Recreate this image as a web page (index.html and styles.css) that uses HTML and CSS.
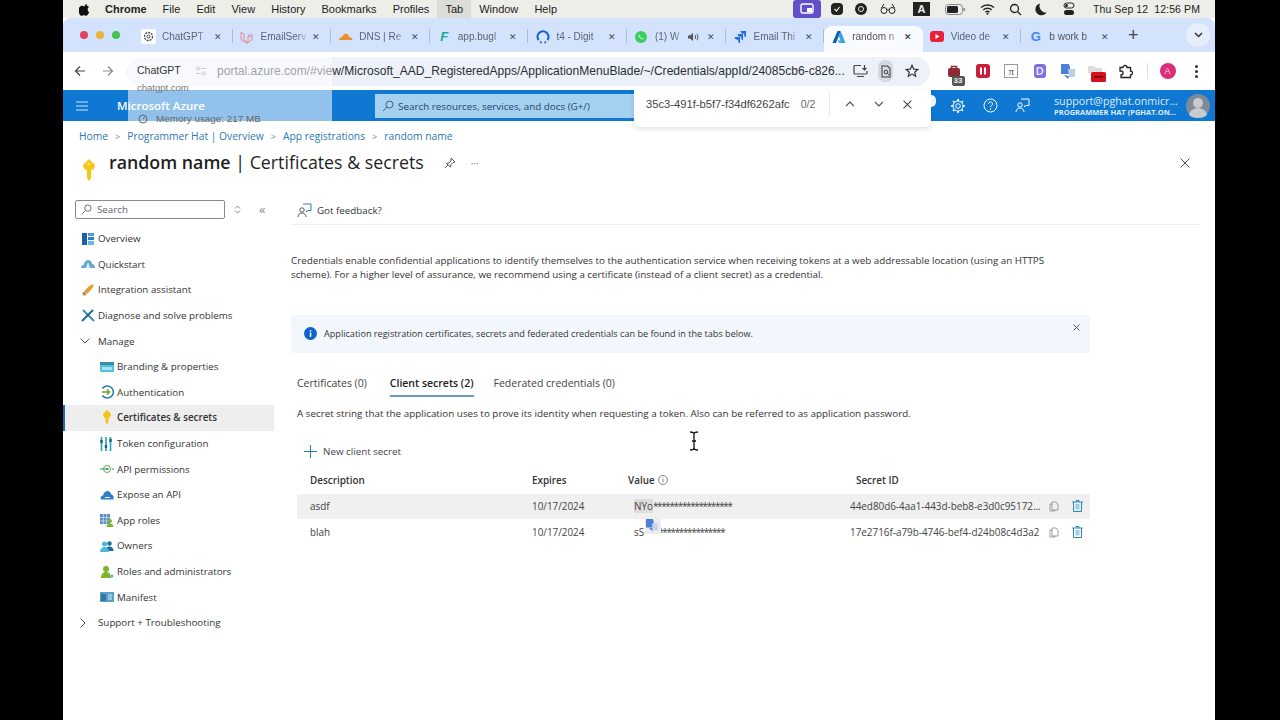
FILE: index.html
```html
<!DOCTYPE html>
<html lang="en">

<head>
  <meta charset="UTF-8" />
  <title>random name | Certificates &amp; secrets</title>
  <meta name="viewport" content="width=device-width, initial-scale=1.0" />
  <link rel="stylesheet" href="styles.css">
</head>

<body>
  <div class="screen">

    <!-- Mac menu bar -->
    <div class="menubar">
      <div class="menu-left">
        <svg class="apple" viewBox="0 0 14 16"><path d="M10.2 1c.1 1-.3 1.9-.9 2.6-.6.7-1.5 1.2-2.4 1.1-.1-1 .4-1.9.9-2.5C8.4 1.5 9.4 1 10.2 1zM13 11.4c-.4.9-.6 1.3-1.1 2.1-.7 1.1-1.7 2.4-2.9 2.4-1.100 0-1.400-.7-2.800-.7s-1.800.7-2.900.7c-1.200 0-2.100-1.200-2.800-2.300C-.5 10.500-.7 7 .5 5.200c.8-1.300 2.100-2 3.300-2 1.200 0 2 .7 3 .7s1.600-.7 3-.7c1.100 0 2.200.6 3 1.600-2.600 1.500-2.200 5.300.2 6.600z"/></svg>
        <span class="menu-app">Chrome</span>
        <span class="menu-item">File</span>
        <span class="menu-item">Edit</span>
        <span class="menu-item">View</span>
        <span class="menu-item">History</span>
        <span class="menu-item">Bookmarks</span>
        <span class="menu-item">Profiles</span>
        <span class="menu-item menu-active">Tab</span>
        <span class="menu-item">Window</span>
        <span class="menu-item">Help</span>
      </div>
      <div class="menu-right">
        <span class="status-purple"><svg width="14" height="12" viewBox="0 0 14 12"><rect x="1" y="1" width="12" height="9" rx="1.5" fill="none" stroke="#fff" stroke-width="1.4"/><rect x="7" y="5" width="5" height="4" fill="#fff"/></svg></span>
        <svg class="st st-shield" width="14" height="14" viewBox="0 0 14 14"><rect x="1" y="1" width="12" height="12" rx="4" fill="#222"/><path d="M4.5 7l2 2 3-4" fill="none" stroke="#eee" stroke-width="1.2"/></svg>
        <svg class="st st-round" width="14" height="14" viewBox="0 0 14 14"><circle cx="7" cy="7" r="6" fill="#222"/><circle cx="7" cy="7" r="2.5" fill="none" stroke="#eee"/></svg>
        <svg class="st st-glasses" width="16" height="12" viewBox="0 0 16 12"><circle cx="4" cy="7.5" r="3" fill="none" stroke="#222"/><circle cx="12" cy="7.5" r="3" fill="none" stroke="#222"/><path d="M7 7c.6-.6 1.400-.6 2 0M1.500 5L4 1M14.500 5L12 1" fill="none" stroke="#222"/></svg>
        <span class="status-a">A</span>
        <svg class="st st-batt" width="21" height="11" viewBox="0 0 21 11"><rect x=".5" y=".5" width="17" height="10" rx="3" fill="none" stroke="#888"/><rect x="2" y="2" width="11" height="7" rx="1.5" fill="#222"/><rect x="18.5" y="4" width="1.5" height="3" fill="#888"/></svg>
        <svg class="st st-wifi" width="15" height="12" viewBox="0 0 15 12"><path d="M1 4.500c3.600-3.400 9.400-3.400 13 0M3.300 7c2.300-2.200 6.100-2.200 8.400 0M5.500 9.200c1.100-1 2.900-1 4 0" fill="none" stroke="#222" stroke-width="1.5"/><circle cx="7.5" cy="10.8" r="1" fill="#222"/></svg>
        <svg class="st st-search" width="13" height="13" viewBox="0 0 13 13"><circle cx="5.5" cy="5.5" r="4" fill="none" stroke="#222" stroke-width="1.3"/><path d="M8.500 8.500L12 12" stroke="#222" stroke-width="1.3"/></svg>
        <svg class="st st-moon" width="12" height="13" viewBox="0 0 12 13"><path d="M5 .5a6 6 0 1 0 6.500 9A6.500 6.500 0 0 1 5 .5z" fill="#222"/></svg>
        <svg class="st st-ctrl" width="12" height="14" viewBox="0 0 12 14"><rect x="1" y="1" width="10" height="5" rx="2.5" fill="none" stroke="#222"/><rect x="1" y="8" width="10" height="5" rx="2.5" fill="#222"/><circle cx="3.5" cy="3.5" r="1.5" fill="#222"/></svg>
        <span class="clock">Thu Sep 12&nbsp; 12:56 PM</span>
      </div>
    </div>

    <!-- Chrome tab strip -->
    <div class="tabstrip">
      <div class="traffic">
        <i class="dot red"></i><i class="dot amber"></i><i class="dot green"></i>
      </div>
      <div class="tabs">
        <div class="tab"><span class="fav fav-gpt"><svg width="11" height="11" viewBox="0 0 11 11"><circle cx="5.5" cy="5.5" r="4" fill="none" stroke="#444" stroke-width="1.3" stroke-dasharray="2 1"/><circle cx="5.5" cy="5.5" r="1.5" fill="none" stroke="#444"/></svg></span><span class="tab-text">ChatGPT</span><span class="tab-x">✕</span></div>
        <div class="tab"><span class="fav"><svg width="14" height="14" viewBox="0 0 14 14"><path d="M1 2.500l3 1.500v6l4 2.500 4-2.500V7M1 2.500v7.500l7 3.500M8 12.500V6l3-2 2 1.500-2 1.500-3-1.500" fill="none" stroke="#e58aa0"/></svg></span><span class="tab-text">EmailServ</span><span class="tab-x">✕</span></div>
        <div class="tab"><span class="fav"><svg width="15" height="9" viewBox="0 0 15 9"><path d="M1 8c0-2 1.500-3 3-3 .6-2.500 3-4 5-3 1.300.6 2 1.800 2 3 1.800-.2 3.500 1.300 3.500 3z" fill="#f0902c"/></svg></span><span class="tab-text">DNS | Re</span><span class="tab-x">✕</span></div>
        <div class="tab"><span class="fav fav-f">F</span><span class="tab-text">app.bugl</span><span class="tab-x">✕</span></div>
        <div class="tab"><span class="fav"><svg width="14" height="14" viewBox="0 0 14 14"><path d="M2.500 10A5.500 5.500 0 1 1 11.500 10" fill="none" stroke="#1a5fd0" stroke-width="2.2"/><path d="M4 11.500l1.500 1.500M10 11.500L8.500 13" stroke="#1a5fd0" stroke-width="1.6"/></svg></span><span class="tab-text">t4 - Digit</span><span class="tab-x">✕</span></div>
        <div class="tab"><span class="fav"><svg width="14" height="14" viewBox="0 0 14 14"><circle cx="7" cy="7" r="6" fill="#3ccf5e"/><path d="M5 4.500c-.8.800-.4 2 .8 3.300S8.700 9.800 9.500 9l-1.300-1-.7.400c-.6-.3-1.200-.9-1.500-1.500l.4-.7z" fill="#fff"/></svg></span><span class="tab-text tab-short">(1) W</span><svg class="tab-speaker" width="12" height="10" viewBox="0 0 12 10"><path d="M1 3.500h2L6 1v8L3 6.500H1z" fill="#555"/><path d="M8 3c.8.800.8 3.200 0 4M9.800 1.800c1.400 1.500 1.400 4.900 0 6.400" fill="none" stroke="#555"/></svg><span class="tab-x">✕</span></div>
        <div class="tab"><span class="fav"><svg width="14" height="14" viewBox="0 0 14 14"><path d="M13 1H7.500c0 1.500 1.200 2.700 2.700 2.700h1V5c0 1.300 1 2.300 1.800 2.300zM10 4H4.500c0 1.500 1.200 2.700 2.700 2.700h1V8c0 1.300 1 2.300 1.800 2.300zM7 7H1.500c0 1.500 1.200 2.700 2.700 2.700h1V11C5.200 12.300 6.200 13.300 7 13.300z" fill="#2070e0"/></svg></span><span class="tab-text">Email Thi</span><span class="tab-x">✕</span></div>
        <div class="tab tab-active"><span class="fav"><svg width="14" height="14" viewBox="0 0 14 14"><path d="M5.500 1h3.200L4 13H.5z" fill="#0a5fb0"/><path d="M8.700 1l4.800 12H7.500L5.500 10.500h3L6.800 6z" fill="#3ba3e8"/></svg></span><span class="tab-text">random n</span><span class="tab-x tab-x-dark">✕</span></div>
        <div class="tab"><span class="fav"><svg width="14" height="11" viewBox="0 0 14 11"><rect width="14" height="11" rx="3" fill="#e8203a"/><path d="M5.500 3v5l4-2.500z" fill="#fff"/></svg></span><span class="tab-text">Video de</span><span class="tab-x">✕</span></div>
        <div class="tab tab-last"><span class="fav fav-g">G</span><span class="tab-text">b work b</span><span class="tab-x">✕</span></div>
        <span class="tab-plus">+</span>
      </div>
      <span class="tab-drop"><svg width="9" height="6" viewBox="0 0 9 6"><path d="M1 1l3.500 3.500L8 1" fill="none" stroke="#333" stroke-width="1.5"/></svg></span>
    </div>

    <!-- Chrome toolbar -->
    <div class="toolbar">
      <svg class="nav-btn" width="12" height="12" viewBox="0 0 12 12"><path d="M11 6H1.500M6 1.500L1.500 6 6 10.500" fill="none" stroke="#444" stroke-width="1.2"/></svg>
      <svg class="nav-btn nav-fwd" width="12" height="12" viewBox="0 0 12 12"><path d="M1 6h9.500M6 1.500L10.500 6 6 10.500" fill="none" stroke="#8a8a8a" stroke-width="1.2"/></svg>
      <div class="omnibox">
        <svg class="tune" width="12" height="10" viewBox="0 0 12 10"><circle cx="3" cy="2.5" r="1.5" fill="none" stroke="#888"/><path d="M6 2.500h5M1 7.500h5" stroke="#888"/><circle cx="9" cy="7.5" r="1.5" fill="none" stroke="#888"/></svg>
        <span class="url">portal.azure.com/#view/Microsoft_AAD_RegisteredApps/ApplicationMenuBlade/~/Credentials/appId/24085cb6-c826...</span>
        <svg class="omni-icon" width="15" height="14" viewBox="0 0 15 14"><path d="M8 1.500H2a1 1 0 0 0-1 1V9a1 1 0 0 0 1 1h11a1 1 0 0 0 1-1V7M4 12.500h7M11.500 1v5M9.500 4l2 2 2-2" fill="none" stroke="#444" stroke-width="1.2"/></svg>
        <span class="lens-btn"><svg width="10" height="13" viewBox="0 0 10 13"><path d="M1 1h5.500L9 3.500V12H1z" fill="none" stroke="#444" stroke-width="1.1"/><circle cx="5" cy="7" r="1.8" fill="none" stroke="#444"/><path d="M6.300 8.300L8 10" stroke="#444"/></svg></span>
        <svg class="omni-star" width="14" height="14" viewBox="0 0 14 14"><path d="M7 1.300l1.700 3.800 4 .4-3 2.700.9 4L7 10.100 3.400 12.200l.9-4-3-2.700 4-.4z" fill="none" stroke="#333" stroke-width="1.2"/></svg>
      </div>
      <div class="extensions">
        <span class="ext ext-bag"><svg width="14" height="13" viewBox="0 0 14 13"><rect x="1" y="3" width="12" height="9" rx="2" fill="#8c2a35"/><path d="M4.500 3V1.500h5V3" fill="none" stroke="#8c2a35" stroke-width="1.5"/></svg><b class="badge-33">33</b></span>
        <span class="ext"><svg width="14" height="14" viewBox="0 0 14 14"><rect width="14" height="14" rx="3" fill="#c81e3c"/><rect x="4" y="3.5" width="2" height="7" fill="#fff"/><rect x="8" y="3.5" width="2" height="7" fill="#fff"/></svg></span>
        <span class="ext"><span class="ext-pi">π</span></span>
        <span class="ext"><span class="ext-d">D</span></span>
        <span class="ext"><svg width="14" height="15" viewBox="0 0 14 15"><path d="M0 0h8l1 3v7H0z" fill="#4a80d8"/><path d="M7 5h7v8H8z" fill="#bcd0e8"/><path d="M3 11l4 4 1-3z" fill="#4a80d8"/></svg></span>
        <span class="ext ext-folder"><svg width="20" height="19" viewBox="0 0 20 19"><path d="M1 2h6l2 2h6v5H1z" fill="#ddd"/><rect x="4" y="8" width="15" height="10" rx="1.5" fill="#d8101c"/><rect x="7" y="12" width="9" height="1.5" fill="#600"/></svg></span>
        <span class="ext"><svg width="15" height="15" viewBox="0 0 15 15"><path d="M2 3.500h3a2 2 0 0 1 4 0h3.500V7a2 2 0 0 1 0 4v2.500H3V11a2 2 0 0 0 0-4H2z" fill="none" stroke="#222" stroke-width="1.3"/></svg></span>
      </div>
      <span class="toolbar-sep"></span>
      <span class="avatar-a">A</span>
      <span class="kebab"><i></i><i></i><i></i></span>
    </div>

    <!-- Azure top bar -->
    <div class="azure-bar">
      <svg class="burger" width="12" height="10" viewBox="0 0 12 10"><path d="M0 1h12M0 5h12M0 9h12" stroke="#cfe4f6"/></svg>
      <span class="azure-name">Microsoft Azure</span>
      <div class="azure-search">
        <svg width="12" height="12" viewBox="0 0 12 12"><circle cx="7.5" cy="4.5" r="3.5" fill="none" stroke="#40607c"/><path d="M5 7L1 11" stroke="#40607c"/></svg>
        <span>Search resources, services, and docs (G+/)</span>
      </div>
      <div class="azure-actions">
        <svg width="16" height="16" viewBox="0 0 16 16"><circle cx="8" cy="8" r="2.3" fill="none" stroke="#fff"/><circle cx="8" cy="8" r="5" fill="none" stroke="#fff"/><path d="M8 1v2M8 13v2M1 8h2M13 8h2M3 3l1.500 1.500M11.500 11.500L13 13M13 3l-1.500 1.500M4.500 11.500L3 13" stroke="#fff" stroke-width="1.6"/></svg>
        <svg width="15" height="15" viewBox="0 0 15 15"><circle cx="7.5" cy="7.5" r="6.5" fill="none" stroke="#fff"/><path d="M5.500 5.800a2 2 0 1 1 3 1.800c-.7.400-1 .8-1 1.600" fill="none" stroke="#fff"/><circle cx="7.5" cy="11" r=".7" fill="#fff"/></svg>
        <svg width="15" height="15" viewBox="0 0 15 15"><path d="M6 1h8v6.500h-3L9.500 9V7.500" fill="none" stroke="#fff"/><circle cx="5" cy="7" r="2.2" fill="none" stroke="#fff"/><path d="M1 14c0-2.500 1.800-4 4-4s4 1.500 4 4" fill="none" stroke="#fff"/></svg>
      </div>
      <div class="account">
        <span class="account-mail">support@pghat.onmicr...</span>
        <span class="account-org">PROGRAMMER HAT (PGHAT.ON...</span>
      </div>
      <span class="account-pic"><svg width="24" height="24" viewBox="0 0 24 24"><circle cx="12" cy="12" r="12" fill="#7e8b96"/><circle cx="12" cy="9" r="5" fill="#c6cbd0"/><path d="M3 21c1-5 5-7 9-7s8 2 9 7c-2 2-5 3-9 3s-7-1-9-3z" fill="#c6cbd0"/></svg></span>
    </div>

    <!-- Portal page -->
    <div class="breadcrumb">
      <a>Home</a><em>&gt;</em><a>Programmer Hat | Overview</a><em>&gt;</em><a>App registrations</a><em>&gt;</em><a>random name</a>
    </div>

    <div class="page-head">
      <svg class="title-key" width="16" height="24" viewBox="0 0 16 24"><path d="M8 1l6 6c0 3-2 5-4 5.500V20l-2 3-2-3v-7.500C4 12 2 10 2 7z" fill="#f5c518"/><circle cx="8" cy="6" r="1.5" fill="#fbe58a"/></svg>
      <h1><b>random name</b> | Certificates &amp; secrets</h1>
      <svg class="pin" width="12" height="12" viewBox="0 0 12 12"><path d="M7 1l4 4-2 .5-2 2-.5 2.500L2.500 6.500 5 6l2-2zM4 8l-3 3" fill="none" stroke="#555"/></svg>
      <span class="more">···</span>
      <svg class="blade-close" width="10" height="10" viewBox="0 0 10 10"><path d="M.5.500l9 9M9.500.500l-9 9" stroke="#555"/></svg>
    </div>

    <div class="blade">
      <div class="sidebar">
        <div class="side-search">
          <div class="side-input">
            <svg width="11" height="11" viewBox="0 0 12 12"><circle cx="7.5" cy="4.5" r="3.5" fill="none" stroke="#666"/><path d="M5 7L1 11" stroke="#666"/></svg>
            <span>Search</span>
          </div>
          <svg class="sort" width="7" height="9" viewBox="0 0 7 9"><path d="M1 3.500L3.500 1 6 3.500M1 5.500L3.500 8 6 5.500" fill="none" stroke="#888"/></svg>
          <span class="collapse">«</span>
        </div>
        <ul class="side-list">
          <li><svg class="ic" width="14" height="14" viewBox="0 0 14 14"><rect x="1" y="1" width="5" height="12" fill="#1d5fa8"/><rect x="7" y="1" width="6" height="3" fill="#4a9ede"/><rect x="7" y="5" width="6" height="3" fill="#2a7fc8"/><rect x="7" y="9" width="6" height="4" fill="#6bb6e6"/></svg>Overview</li>
          <li><svg class="ic" width="14" height="10" viewBox="0 0 14 10"><path d="M0 9c0-2 1-3 2.500-3C3 3 5 1 7 1c2.500 0 4 2 4.200 4C13 5 14 7 14 9z" fill="#6aaac8"/><path d="M7 3l2 6H5z" fill="#dbeef8"/></svg>Quickstart</li>
          <li><svg class="ic" width="14" height="14" viewBox="0 0 14 14"><path d="M13 1C9 2 5 5 3 9l2 2c4-2 7-6 8-10z" fill="#e0a030"/><path d="M3 9l-2 1 3 3 1-2z" fill="#d0622a"/><path d="M1 13l2-3 1 1z" fill="#8ab040"/></svg>Integration assistant</li>
          <li><svg class="ic" width="14" height="14" viewBox="0 0 14 14"><path d="M2 1l11 11" stroke="#3a8fb0" stroke-width="2"/><path d="M12 1L1 12" stroke="#1d6a88" stroke-width="2"/></svg>Diagnose and solve problems</li>
          <li><svg class="chev" width="10" height="6" viewBox="0 0 10 6"><path d="M.5.500L5 5 9.500.500" fill="none" stroke="#555"/></svg>Manage</li>
          <li class="sub"><svg class="ic" width="14" height="12" viewBox="0 0 14 12"><rect y="1" width="14" height="10" rx="1" fill="#4fc3d9"/><rect y="1" width="14" height="3" fill="#3a8fa8"/><rect x="2" y="6" width="10" height="3" fill="#a6e3ee"/></svg>Branding &amp; properties</li>
          <li class="sub"><svg class="ic" width="14" height="14" viewBox="0 0 14 14"><path d="M2.500 3.500a6 6 0 1 1 0 7" fill="none" stroke="#1f7fa8" stroke-width="1.5"/><path d="M2 7h7M7 4.500L9.500 7 7 9.500" fill="none" stroke="#6aa82a" stroke-width="1.5"/></svg>Authentication</li>
          <li class="sub side-active"><svg class="ic" width="10" height="15" viewBox="0 0 10 15"><path d="M5 0l4 4c0 2-1.200 3.500-2.500 3.900V12L5 14.500 3.500 12V7.900C2.200 7.500 1 6 1 4z" fill="#f5c518"/></svg>Certificates &amp; secrets</li>
          <li class="sub"><svg class="ic" width="12" height="14" viewBox="0 0 12 14"><path d="M1.500 0v14M6 0v14M10.500 0v14" stroke="#2aa0b8" stroke-width="1.6"/><path d="M1.500 3v3M6 8v3M10.500 2v3" stroke="#1a5f78" stroke-width="2.4"/></svg>Token configuration</li>
          <li class="sub"><svg class="ic" width="14" height="10" viewBox="0 0 14 10"><circle cx="7" cy="5" r="3.5" fill="none" stroke="#6aa82a"/><path d="M0 5h9M12 5h2" stroke="#2a90a8"/><circle cx="7" cy="5" r="1" fill="#2a90a8"/></svg>API permissions</li>
          <li class="sub"><svg class="ic" width="14" height="10" viewBox="0 0 14 10"><path d="M1 9.500c-1-2 .2-4 2-4C3.500 3 5.500 1 7.500 1c2.300 0 3.500 2 3.700 3.500 2 0 3 2.500 2 5z" fill="#2c7fc8"/><path d="M5 7.500h5" stroke="#fff"/></svg>Expose an API</li>
          <li class="sub"><svg class="ic" width="14" height="14" viewBox="0 0 14 14"><rect y="1" width="10" height="10" fill="#5a8fc0"/><path d="M0 4.500h10M0 8h10M3.300 1v10M6.600 1v10" stroke="#d6e6f2" stroke-width=".7"/><circle cx="10" cy="8" r="2" fill="#7ab82a"/><path d="M6.500 14c0-2 1.500-3.500 3.500-3.500s3.500 1.500 3.500 3.500z" fill="#7ab82a"/></svg>App roles</li>
          <li class="sub"><svg class="ic" width="14" height="12" viewBox="0 0 14 12"><circle cx="9.5" cy="3.5" r="2.3" fill="#1f6f98"/><path d="M5.500 11c0-3 1.500-4.500 4-4.500s4 1.500 4 4.500z" fill="#1f6f98"/><circle cx="4.5" cy="4" r="2.5" fill="#4fb5dc"/><path d="M0 12c0-3 1.800-5 4.500-5S9 9 9 12z" fill="#4fb5dc"/></svg>Owners</li>
          <li class="sub"><svg class="ic" width="14" height="14" viewBox="0 0 14 14"><circle cx="6" cy="4" r="3" fill="#7ab82a"/><path d="M1 13c0-4 2-6 5-6s5 2 5 6z" fill="#7ab82a"/><circle cx="12" cy="11" r="1.5" fill="#4fb5dc"/></svg>Roles and administrators</li>
          <li class="sub"><svg class="ic" width="14" height="12" viewBox="0 0 14 12"><rect y="1" width="14" height="10" fill="#5a9fc8"/><rect x="1" y="3" width="5" height="7" fill="#2f78a8"/><path d="M8 4h4M8 6h4M8 8h4" stroke="#cfe6f2"/></svg>Manifest</li>
          <li><svg class="chev" width="6" height="10" viewBox="0 0 6 10"><path d="M.5.500L5 5 .5 9.500" fill="none" stroke="#555"/></svg>Support + Troubleshooting</li>
        </ul>
      </div>

      <div class="content">
        <div class="command-bar">
          <svg width="15" height="15" viewBox="0 0 15 15"><path d="M6 1h8v6.500h-3L9.500 9V7.500" fill="none" stroke="#2a7fb8"/><circle cx="5" cy="7" r="2.2" fill="none" stroke="#555"/><path d="M1 14c0-2.500 1.800-4 4-4s4 1.500 4 4" fill="none" stroke="#555"/></svg>
          <span>Got feedback?</span>
        </div>

        <p class="intro">Credentials enable confidential applications to identify themselves to the authentication service when receiving tokens at a web addressable location (using an HTTPS scheme). For a higher level of assurance, we recommend using a certificate (instead of a client secret) as a credential.</p>

        <div class="banner">
          <svg width="13" height="13" viewBox="0 0 13 13"><circle cx="6.5" cy="6.5" r="6.5" fill="#0f62c9"/><rect x="5.800" y="5.500" width="1.500" height="4.500" fill="#fff"/><rect x="5.800" y="3" width="1.500" height="1.500" fill="#fff"/></svg>
          <span>Application registration certificates, secrets and federated credentials can be found in the tabs below.</span>
          <svg class="banner-x" width="7" height="7" viewBox="0 0 7 7"><path d="M.5.500l6 6M6.500.500l-6 6" stroke="#555"/></svg>
        </div>

        <div class="cred-tabs">
          <span class="cred-tab">Certificates (0)</span>
          <span class="cred-tab cred-active">Client secrets (2)</span>
          <span class="cred-tab">Federated credentials (0)</span>
        </div>

        <div class="tab-body">
          <p class="secret-desc">A secret string that the application uses to prove its identity when requesting a token. Also can be referred to as application password.</p>

          <div class="new-secret">
            <svg width="13" height="13" viewBox="0 0 13 13"><path d="M6.500 0v13M0 6.500h13" stroke="#2a7fa8"/></svg>
            <span>New client secret</span>
          </div>

          <div class="secrets">
            <div class="row row-head">
              <span class="c-desc">Description</span>
              <span class="c-exp">Expires</span>
              <span class="c-val">Value <svg width="10" height="10" viewBox="0 0 10 10"><circle cx="5" cy="5" r="4.5" fill="none" stroke="#666" stroke-width=".8"/><path d="M5 4v3.500M5 2.500v.8" stroke="#666" stroke-width=".8"/></svg></span>
              <span class="c-id">Secret ID</span>
            </div>
            <div class="row row-hover">
              <span class="c-desc">asdf</span>
              <span class="c-exp">10/17/2024</span>
              <span class="c-val c-mask"><mark>NYo</mark><span class="stars">*******************</span></span>
              <span class="c-id c-idval">44ed80d6-4aa1-443d-beb8-e3d0c95172...</span>
              <svg class="copy" width="10" height="11" viewBox="0 0 10 11"><path d="M3 1h4l2 2v6H3zM3 3H1v7h5V9" fill="none" stroke="#888" stroke-width=".8"/></svg>
              <svg class="trash" width="11" height="12" viewBox="0 0 11 12"><path d="M0 2h11M4 2V.5h3V2M1.500 2v9.500h8V2" fill="none" stroke="#2a88b8"/><rect x="3.500" y="4" width="4" height="5.500" fill="#9ccbe4"/></svg>
            </div>
            <div class="row">
              <span class="c-desc">blah</span>
              <span class="c-exp">10/17/2024</span>
              <span class="c-val c-mask">sS<span class="mask-gap"></span><span class="stars">****************</span></span>
              <span class="c-id c-idval">17e2716f-a79b-4746-bef4-d24b08c4d3a2</span>
              <svg class="copy" width="10" height="11" viewBox="0 0 10 11"><path d="M3 1h4l2 2v6H3zM3 3H1v7h5V9" fill="none" stroke="#888" stroke-width=".8"/></svg>
              <svg class="trash" width="11" height="12" viewBox="0 0 11 12"><path d="M0 2h11M4 2V.5h3V2M1.500 2v9.500h8V2" fill="none" stroke="#2a88b8"/><rect x="3.500" y="4" width="4" height="5.500" fill="#9ccbe4"/></svg>
            </div>
          </div>
        </div>
      </div>
    </div>

    <!-- Chrome tab hover card, lies over the toolbar and the portal -->
    <div class="hovercard">
      <div class="hc-title">ChatGPT</div>
      <div class="hc-host">chatgpt.com</div>
      <div class="hc-mem">
        <svg width="10" height="10" viewBox="0 0 10 10"><circle cx="5" cy="5" r="4" fill="none" stroke="#666"/><path d="M5 5l2-2" stroke="#666"/></svg>
        Memory usage: 217 MB
      </div>
    </div>

    <!-- Chrome find in page bar -->
    <div class="findbar">
      <span class="find-text">35c3-491f-b5f7-f34df6262afc</span>
      <span class="find-count">0/2</span>
      <span class="find-sep"></span>
      <svg width="10" height="6" viewBox="0 0 10 6"><path d="M1 5l4-4 4 4" fill="none" stroke="#555" stroke-width="1.2"/></svg>
      <svg width="10" height="6" viewBox="0 0 10 6"><path d="M1 1l4 4 4-4" fill="none" stroke="#555" stroke-width="1.2"/></svg>
      <svg width="9" height="9" viewBox="0 0 9 9"><path d="M.5.500l8 8M8.500.500l-8 8" stroke="#444" stroke-width="1.1"/></svg>
    </div>
    <span class="notif-dot"></span>

    <!-- Text cursor and translate popup over the page -->
    <svg class="ibeam" width="10" height="20" viewBox="0 0 10 20"><path d="M1 1c2 0 4 .5 4 2v14c0 1.500-2 2-4 2M9 1c-2 0-4 .5-4 2v14c0 1.500 2 2 4 2M3 10h4" fill="none" stroke="#111" stroke-width="1.3"/></svg>
    <span class="translate-pop"><svg width="12" height="12" viewBox="0 0 14 14"><path d="M0 0h8l1 3v7H0z" fill="#4a80d8"/><path d="M7 5h7v8H8z" fill="#c8d6e6"/><path d="M3 10l4 4 1-3z" fill="#4a80d8"/></svg></span>
  </div>
</body>

</html>
```

FILE: styles.css
```css
* {
  box-sizing: border-box;
}

html,
body {
  margin: 0;
  height: 100%;
  overflow: hidden;
  background: #000;
}

body {
  font-family: 'Open Sans', 'Liberation Sans', sans-serif;
  color: #2b2b2b;
}

.screen {
  position: relative;
  width: 1152px;
  height: 720px;
  margin-left: 63px;
  background: #fff;
  overflow: hidden;
}

/* Menu bar */
.menubar {
  display: flex;
  justify-content: space-between;
  align-items: center;
  height: 18px;
  padding: 0 15px 0 16px;
  background: #eeeee9;
  font-family: 'Liberation Sans', sans-serif;
  font-size: 11px;
  color: #222;
}

.menu-left,
.menu-right {
  display: flex;
  align-items: center;
  height: 100%;
}

.apple {
  width: 11px;
  height: 13px;
  margin-right: 15px;
  fill: #111;
}

.menu-app {
  font-weight: 700;
  margin-right: 16px;
}

.menu-item {
  margin-right: 16.1px;
}

.menu-active {
  margin-left: -8px;
  margin-right: 8px;
  padding: 3px 8px;
  background: #dcdcd8;
}

.status-purple {
  display: flex;
  align-items: center;
  justify-content: center;
  width: 28px;
  height: 18px;
  margin-right: 9px;
  border-radius: 3px;
  background: #5f4fc8;
}

.st {
  flex: none;
  margin-right: 10px;
}

.st-round { margin-right: 12px; }
.st-glasses { margin-right: 17px; }
.st-batt { margin-right: 14px; }
.st-wifi { margin-right: 14px; }
.st-search { margin-right: 13px; }
.st-moon { margin-right: 16px; }
.st-ctrl { margin-right: 18px; }

.status-a {
  width: 17px;
  height: 14px;
  margin-right: 15px;
  background: #222;
  color: #eee;
  font-weight: 700;
  text-align: center;
  line-height: 14px;
}

.clock {
  font-size: 10.5px;
  letter-spacing: 0.1px;
  white-space: nowrap;
}

/* Tab strip */
.tabstrip {
  display: flex;
  align-items: center;
  height: 34px;
  background: #d3e3fd;
  border-radius: 8px 8px 0 0;
}

.traffic {
  display: flex;
  gap: 8px;
  padding-left: 17px;
  width: 71px;
  flex: none;
}

.dot {
  width: 8px;
  height: 8px;
  border-radius: 50%;
}

.red { background: #e0445a; }
.amber { background: #eeb13c; }
.green { background: #45c24e; }

.tabs {
  display: flex;
  align-items: center;
  flex: 1;
  height: 100%;
}

.tab {
  display: flex;
  align-items: center;
  flex: none;
  width: 98.6px;
  height: 26px;
  margin-top: 3px;
  padding: 0 9px 0 7px;
  font-family: 'Liberation Sans', sans-serif;
  font-size: 10px;
  color: #5c6470;
  position: relative;
}

.tab::after {
  content: "";
  position: absolute;
  right: 0;
  top: 5px;
  height: 14px;
  border-right: 1px solid #aebfd6;
}

.tab-active,
.tab-last {
  color: #555;
}

.tab-active {
  height: 26px;
  margin-top: 8px;
  padding-bottom: 5px;
  border-radius: 8px 8px 0 0;
  background: #f8fbff;
}

.tab-active::after,
.tab-last::after {
  border: 0;
}

.fav {
  display: flex;
  align-items: center;
  justify-content: center;
  flex: none;
  width: 15px;
  height: 15px;
  margin-right: 6px;
}

.fav-gpt {
  background: #fff;
  border-radius: 3px;
}

.fav-f {
  color: #1ba98a;
  font-size: 13px;
  font-weight: 700;
  font-style: italic;
}

.fav-g {
  color: #4285f4;
  font-size: 13px;
  font-weight: 700;
}

.tab-text {
  flex: 1;
  overflow: hidden;
  white-space: nowrap;
  -webkit-mask-image: linear-gradient(to right, #000 70%, transparent 100%);
  mask-image: linear-gradient(to right, #000 70%, transparent 100%);
}

.tab-short {
  flex: none;
  width: 28px;
}

.tab-speaker {
  margin: 0 6px 0 auto;
}

.tab-x {
  flex: none;
  width: 12px;
  font-size: 9px;
  text-align: center;
  color: #45505e;
}

.tab-x-dark {
  color: #111;
}

.tab-plus {
  margin-left: 8px;
  font-family: 'Liberation Sans', sans-serif;
  font-size: 18px;
  color: #444;
}

.tab-drop {
  display: flex;
  align-items: center;
  justify-content: center;
  flex: none;
  width: 24px;
  height: 24px;
  margin-right: 5px;
  border-radius: 50%;
  background: #e6eefb;
}

/* Toolbar */
.toolbar {
  display: flex;
  align-items: center;
  height: 38px;
  padding-left: 11px;
  background: #fff;
}

.nav-btn {
  flex: none;
  margin-right: 16px;
}

.nav-fwd {
  margin-right: 13px;
}

.omnibox {
  display: flex;
  align-items: center;
  flex: none;
  width: 803px;
  height: 29px;
  padding: 0 11px 0 68px;
  border-radius: 15px;
  background: #edf2fa;
  font-family: 'Liberation Sans', sans-serif;
}

.tune {
  flex: none;
  margin-right: 10px;
}

.url {
  flex: 1;
  min-width: 0;
  overflow: hidden;
  font-size: 12.05px;
  white-space: nowrap;
  color: #2a2f36;
}

.omni-icon {
  flex: none;
  margin-left: 6px;
}

.omni-star {
  flex: none;
  margin-left: 12px;
}

.lens-btn {
  display: flex;
  align-items: center;
  justify-content: center;
  flex: none;
  width: 15px;
  height: 22px;
  margin-left: 10px;
  border-radius: 7px;
  background: #d4d9e0;
}

.extensions {
  display: flex;
  align-items: center;
  margin-left: 10px;
}

.ext {
  display: flex;
  align-items: center;
  justify-content: center;
  position: relative;
  width: 28.5px;
  height: 20px;
}

.badge-33 {
  position: absolute;
  right: 4px;
  bottom: -5px;
  padding: 0 2px;
  border-radius: 2px;
  background: #555;
  color: #eee;
  font: 700 8px/10px 'Liberation Sans', sans-serif;
}

.ext-pi {
  display: block;
  width: 14px;
  height: 14px;
  border: 1px solid #999;
  font: 11px/12px 'Liberation Serif', serif;
  text-align: center;
  color: #555;
}

.ext-d {
  display: block;
  width: 12px;
  height: 14px;
  border-radius: 3px;
  background: #7a70e0;
  color: #e4e0fa;
  font: 700 11px/14px 'Liberation Sans', sans-serif;
  text-align: center;
}

.ext-folder svg {
  margin-top: 4px;
}

.toolbar-sep {
  width: 1px;
  height: 16px;
  margin: 0 12px 0 7px;
  background: #dde3ea;
}

.avatar-a {
  width: 16px;
  height: 16px;
  border-radius: 50%;
  background: #d92d7a;
  color: #f4cde0;
  font: 9px/16px 'Liberation Sans', sans-serif;
  text-align: center;
}

.kebab {
  display: flex;
  flex-direction: column;
  gap: 2px;
  margin-left: 19px;
}

.kebab i {
  width: 3px;
  height: 3px;
  border-radius: 50%;
  background: #333;
}

/* Azure bar */
.azure-bar {
  display: flex;
  align-items: center;
  height: 31px;
  background: #0f78d2;
  color: #fff;
  white-space: nowrap;
}

.burger {
  margin-left: 13px;
  flex: none;
}

.azure-name {
  flex: none;
  width: 258px;
  margin-left: 29px;
  font-size: 11.5px;
  font-weight: 600;
}

.azure-search {
  display: flex;
  align-items: center;
  gap: 4px;
  flex: none;
  width: 270px;
  height: 24px;
  padding-left: 7px;
  background: #a4d0f2;
  color: #26465f;
  font-size: 9.85px;
}

.azure-actions {
  display: flex;
  align-items: center;
  gap: 17px;
  margin-left: 305px;
}

.account {
  display: flex;
  flex-direction: column;
  width: 128px;
  margin: 2px 0 0 24px;
  line-height: 1.1;
}

.account-mail {
  font-size: 10.7px;
  color: #dcecf9;
}

.account-org {
  font-size: 7.5px;
  font-weight: 700;
  color: #dcecf9;
}

.account-pic {
  display: flex;
  margin-left: 4px;
}

/* Breadcrumb and title */
.breadcrumb {
  display: flex;
  align-items: center;
  height: 30px;
  padding-left: 16px;
  font-size: 10.3px;
  color: #2f78b0;
}

.breadcrumb em {
  margin: 0 7px;
  font-style: normal;
  font-size: 9px;
  color: #888;
}

.page-head {
  display: flex;
  align-items: center;
  height: 24px;
  padding-left: 18px;
  padding-right: 25px;
}

.title-key {
  flex: none;
  margin-top: 14px;
}

.page-head h1 {
  margin: -2px 0 0 12px;
  font-size: 17.8px;
  font-weight: 400;
  color: #1f1f1f;
  white-space: nowrap;
}

.page-head h1 b {
  font-weight: 600;
}

.pin {
  margin-left: 20px;
}

.more {
  margin-left: 15px;
  font-size: 10px;
  color: #777;
}

.blade-close {
  margin-left: auto;
}

/* Blade */
.blade {
  display: flex;
  margin-top: 25px;
}

.sidebar {
  flex: none;
  width: 211px;
  font-size: 9.8px;
  color: #333;
}

.side-search {
  display: flex;
  align-items: center;
  height: 19px;
  padding-left: 12px;
  margin-bottom: 7px;
}

.side-input {
  display: flex;
  align-items: center;
  gap: 5px;
  width: 150px;
  height: 19px;
  padding-left: 5px;
  border: 1px solid #8a8a8a;
  border-radius: 2px;
  color: #666;
}

.sort {
  margin-left: 9px;
}

.collapse {
  margin-left: 18px;
  font-size: 13px;
  line-height: 1;
  color: #888;
}

.side-list {
  margin: 0;
  padding: 0;
  list-style: none;
}

.side-list li {
  display: flex;
  align-items: center;
  position: relative;
  height: 25.6px;
  padding-left: 35px;
  white-space: nowrap;
}

.side-list li.sub {
  padding-left: 54px;
}

.side-list .ic {
  position: absolute;
  left: 18px;
}

.side-list .sub .ic {
  left: 37px;
}

.side-list .chev {
  position: absolute;
  left: 17px;
}

.side-list li.side-active {
  padding-left: 52px;
  background: #eeeeee;
  border-left: 2px solid #1c6bb0;
  font-weight: 600;
}

.side-list .side-active .ic {
  left: 37px;
}

/* Content */
.content {
  flex: none;
  width: 909px;
  margin-left: 17px;
  font-size: 9.8px;
}

.command-bar {
  display: flex;
  align-items: center;
  gap: 5px;
  height: 26px;
  margin-top: -1px;
  padding: 0 0 3px 6px;
  border-bottom: 1px solid #efefef;
  color: #333;
}

.intro {
  width: 770px;
  margin: 29px 0 0;
  line-height: 14.3px;
  color: #333;
}

.banner {
  display: flex;
  align-items: center;
  gap: 7px;
  position: relative;
  width: 799px;
  height: 38px;
  margin-top: 32px;
  padding-left: 13px;
  background: #f2f7fd;
  font-size: 9.1px;
  color: #333;
}

.banner-x {
  position: absolute;
  right: 10px;
  top: 9px;
}

.cred-tabs {
  display: flex;
  gap: 23px;
  height: 34px;
  margin-top: 20px;
  padding-left: 6px;
  align-items: flex-start;
  padding-top: 3px;
}

.cred-tab {
  padding-bottom: 5px;
  font-size: 10.5px;
  color: #444;
}

.cred-active {
  margin-right: -3px;
  font-weight: 600;
  color: #222;
  border-bottom: 2px solid #6a9db5;
}

.tab-body {
  padding-left: 6px;
}

.secret-desc {
  margin: -1px 0 0;
  font-size: 9.86px;
  color: #333;
}

.new-secret {
  display: flex;
  align-items: center;
  gap: 6px;
  height: 24px;
  margin-top: 20px;
  padding-left: 7px;
  color: #444;
}

.secrets {
  margin-top: 3px;
  width: 793px;
}

.row {
  display: flex;
  align-items: center;
  position: relative;
  height: 25.8px;
  font-size: 9.9px;
  color: #444;
}

.row-head {
  height: 27px;
  font-weight: 600;
  color: #333;
}

.row-hover {
  background: #f0f0f0;
}

.c-desc {
  width: 235px;
  padding-left: 13px;
}

.c-exp {
  width: 96px;
}

.c-val {
  display: flex;
  align-items: center;
  gap: 3px;
  width: 228px;
}

.c-mask {
  display: block;
  padding-left: 6px;
  width: 222px;
}

.c-mask mark {
  background: #dcdcdc;
  color: inherit;
}

.stars {
  letter-spacing: -1.3px;
}

.mask-gap {
  display: inline-block;
  width: 14px;
}

.c-idval {
  margin-left: 0;
  width: 195px;
  white-space: nowrap;
}

.copy {
  position: absolute;
  left: 752px;
}

.trash {
  position: absolute;
  left: 775px;
}

/* Overlays */
.hovercard {
  position: absolute;
  left: 65px;
  top: 57px;
  width: 204px;
  height: 74px;
  padding: 7px 0 0 9px;
  background: rgba(255, 255, 255, 0.55);
  font-family: 'Liberation Sans', sans-serif;
  font-size: 10.5px;
  color: #555;
}

.hc-title {
  color: #333;
}

.hc-host {
  margin-top: 6px;
  font-size: 9.5px;
  color: #777;
}

.hc-mem {
  display: flex;
  align-items: center;
  gap: 8px;
  margin-top: 20px;
  padding-left: 1px;
  font-size: 9.9px;
  color: #666;
}

.findbar {
  position: absolute;
  left: 571px;
  top: 90px;
  display: flex;
  align-items: center;
  width: 297px;
  height: 37px;
  padding: 0 0 9px 12px;
  background: #fff;
  border-radius: 0 0 6px 6px;
  box-shadow: 0 2px 5px rgba(0, 0, 0, 0.12);
  font-family: 'Liberation Sans', sans-serif;
  font-size: 11.2px;
  color: #444;
}

.find-text {
  width: 155px;
  white-space: nowrap;
}

.find-count {
  width: 20px;
  margin-left: 2px;
  font-size: 10.5px;
  color: #666;
}

.find-sep {
  width: 1px;
  height: 24px;
  margin: 0 15px 0 9px;
  background: #e8e8e8;
}

.findbar svg {
  margin-right: 19px;
}

.notif-dot {
  position: absolute;
  left: 868px;
  top: 95px;
  width: 5px;
  height: 12px;
  border-radius: 0 5px 5px 0;
  background: #f2f6fb;
}

.ibeam {
  position: absolute;
  left: 626px;
  top: 431px;
}

.translate-pop {
  position: absolute;
  left: 582px;
  top: 518px;
  display: flex;
  padding: 1px 3px 3px 1px;
  background: #ececec;
}
```
